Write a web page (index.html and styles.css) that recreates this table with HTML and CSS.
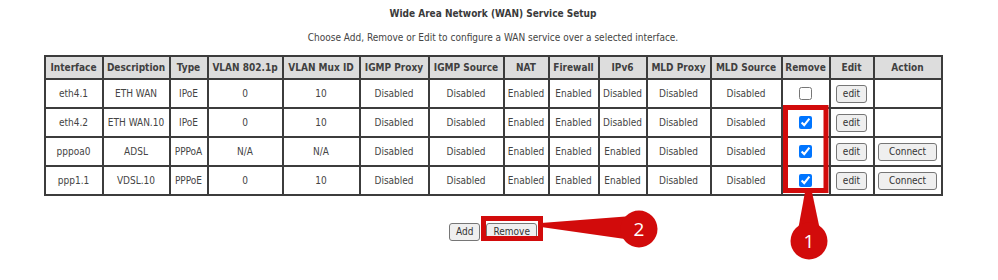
FILE: index.html
```html
<!DOCTYPE html>
<html>
<head>
<meta charset="utf-8">
<link rel="stylesheet" href="styles.css">
</head>
<body>
<div class="page">
  <div class="title">Wide Area Network (WAN) Service Setup</div>
  <div class="subtitle">Choose Add, Remove or Edit to configure a WAN service over a selected interface.</div>
  <table class="wan">
    <colgroup>
      <col style="width:58px"><col style="width:67px"><col style="width:38px"><col style="width:75px"><col style="width:77px"><col style="width:69px"><col style="width:75px"><col style="width:45px"><col style="width:50px"><col style="width:48px"><col style="width:64px"><col style="width:71px"><col style="width:48px"><col style="width:44px"><col style="width:68px">
    </colgroup>
    <tr class="head">
      <th>Interface</th><th>Description</th><th>Type</th><th>VLAN 802.1p</th><th>VLAN Mux ID</th><th>IGMP Proxy</th><th>IGMP Source</th><th>NAT</th><th>Firewall</th><th>IPv6</th><th>MLD Proxy</th><th>MLD Source</th><th>Remove</th><th>Edit</th><th>Action</th>
    </tr>
    <tr>
      <td>eth4.1</td><td>ETH WAN</td><td>IPoE</td><td>0</td><td>10</td><td>Disabled</td><td>Disabled</td><td>Enabled</td><td>Enabled</td><td>Disabled</td><td>Disabled</td><td>Disabled</td>
      <td><input type="checkbox" class="chk"></td><td><button class="btn">edit</button></td><td></td>
    </tr>
    <tr>
      <td>eth4.2</td><td>ETH WAN.10</td><td>IPoE</td><td>0</td><td>10</td><td>Disabled</td><td>Disabled</td><td>Enabled</td><td>Enabled</td><td>Disabled</td><td>Disabled</td><td>Disabled</td>
      <td><input type="checkbox" class="chk" checked></td><td><button class="btn">edit</button></td><td></td>
    </tr>
    <tr>
      <td>pppoa0</td><td>ADSL</td><td>PPPoA</td><td>N/A</td><td>N/A</td><td>Disabled</td><td>Disabled</td><td>Enabled</td><td>Enabled</td><td>Enabled</td><td>Disabled</td><td>Disabled</td>
      <td><input type="checkbox" class="chk" checked></td><td><button class="btn">edit</button></td><td><button class="btn wide">Connect</button></td>
    </tr>
    <tr>
      <td>ppp1.1</td><td>VDSL.10</td><td>PPPoE</td><td>0</td><td>10</td><td>Disabled</td><td>Disabled</td><td>Enabled</td><td>Enabled</td><td>Enabled</td><td>Disabled</td><td>Disabled</td>
      <td><input type="checkbox" class="chk" checked></td><td><button class="btn">edit</button></td><td><button class="btn wide">Connect</button></td>
    </tr>
  </table>
  <div class="actions">
    <button class="btn">Add</button>
    <button class="btn">Remove</button>
  </div>
</div>
<svg class="overlay" width="998" height="280" viewBox="0 0 998 280">
  <rect x="785.5" y="107.5" width="40.5" height="83" fill="none" stroke="#d20b0b" stroke-width="5"/>
  <polygon points="805,192 812,192 820,230 798,230" fill="#d20b0b"/>
  <circle cx="809" cy="241" r="18.5" fill="#d20b0b"/>
  <text x="809" y="248" class="num">1</text>
  <rect x="483.5" y="218.5" width="57" height="20" fill="none" stroke="#d20b0b" stroke-width="5"/>
  <polygon points="541,223 632,216 632,240 541,227" fill="#d20b0b"/>
  <circle cx="639" cy="229" r="18.5" fill="#d20b0b"/>
  <text x="639" y="236" class="num">2</text>
</svg>
</body>
</html>
```
FILE: styles.css
```css
html, body {
  margin: 0;
  padding: 0;
  background: #ffffff;
}
body {
  font-family: "DejaVu Sans Condensed", "DejaVu Sans", sans-serif;
  font-size: 10px;
  color: #444444;
  position: relative;
  width: 998px;
  height: 280px;
  overflow: hidden;
}
.page {
  width: 986px;
  padding-top: 7px;
  text-align: center;
}
.title {
  font-weight: bold;
  color: #3a3a3a;
  line-height: 14px;
}
.subtitle {
  margin-top: 10px;
  line-height: 14px;
}
.wan {
  margin: 10px auto 0;
  width: 897px;
  table-layout: fixed;
  border-collapse: collapse;
  border: 2px solid #3c3c3c;
}
.wan th, .wan td {
  border: 2px solid #3c3c3c;
  padding: 0 2px;
  text-align: center;
  white-space: nowrap;
  overflow: hidden;
}
.wan th {
  background: #dddddd;
  color: #404040;
  font-weight: bold;
  height: 21px;
}
.wan td {
  height: 27px;
}
.chk {
  margin: 0;
  vertical-align: middle;
}
.btn {
  font-family: "DejaVu Sans Condensed", "DejaVu Sans", sans-serif;
  font-size: 10px;
  color: #333333;
  background: #efefef;
  border: 1px solid #767676;
  border-radius: 3px;
  padding: 2px 6px;
  line-height: 12px;
  vertical-align: middle;
}
.wide {
  width: 59px;
}
.actions {
  margin-top: 27px;
  display: flex;
  justify-content: center;
  gap: 6px;
}
.overlay {
  position: absolute;
  left: 0;
  top: 0;
  pointer-events: none;
}
.num {
  fill: #ffffff;
  font-family: "Open Sans", "Noto Sans", sans-serif;
  font-size: 19px;
  text-anchor: middle;
}
```
